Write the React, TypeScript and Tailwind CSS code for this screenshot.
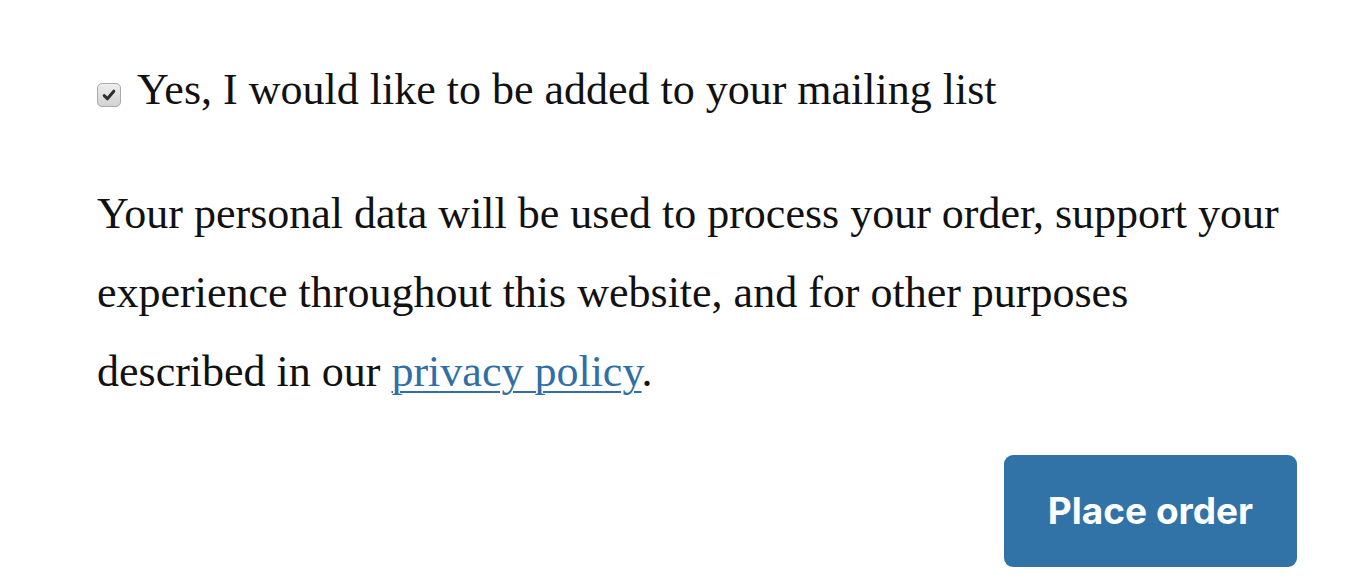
export default function App() {
  return (
    <main className="min-h-screen bg-white pl-[97px] pt-[62px]">
      <label className="flex items-center gap-[16px] font-['Liberation_Serif',serif] text-[44px] leading-[56px] text-[#111]">
        <span className="mt-[10px] flex h-[24px] w-[24px] shrink-0 items-center justify-center rounded-[5px] border border-[#a9a9a9] bg-gradient-to-b from-[#eeeeee] to-[#d2d2d2]">
          <svg viewBox="0 0 16 16" className="h-[16px] w-[16px]">
            <path d="M3.2 8.6 L6.4 11.8 L12.8 4.2" fill="none" stroke="#2e2e2e" strokeWidth="3" strokeLinecap="round" strokeLinejoin="round" />
          </svg>
        </span>
        <span>Yes, I would like to be added to your mailing list</span>
      </label>
      <p className="mt-[56px] w-[1200px] font-['Liberation_Serif',serif] text-[44px] leading-[79px] text-[#111]">
        Your personal data will be used to process your order, support your experience throughout this website, and for
        other purposes described in our{" "}
        <a href="#" className="text-[#2f6fa5] underline decoration-[2px] underline-offset-[5px]">
          privacy policy
        </a>
        .
      </p>
      <div className="mt-[44px] flex justify-end pr-[68px]">
        <button className="h-[112px] w-[293px] rounded-[9px] bg-[#3173a6] font-['Inter',sans-serif] text-[37px] font-bold text-white">
          Place order
        </button>
      </div>
    </main>
  )
}
